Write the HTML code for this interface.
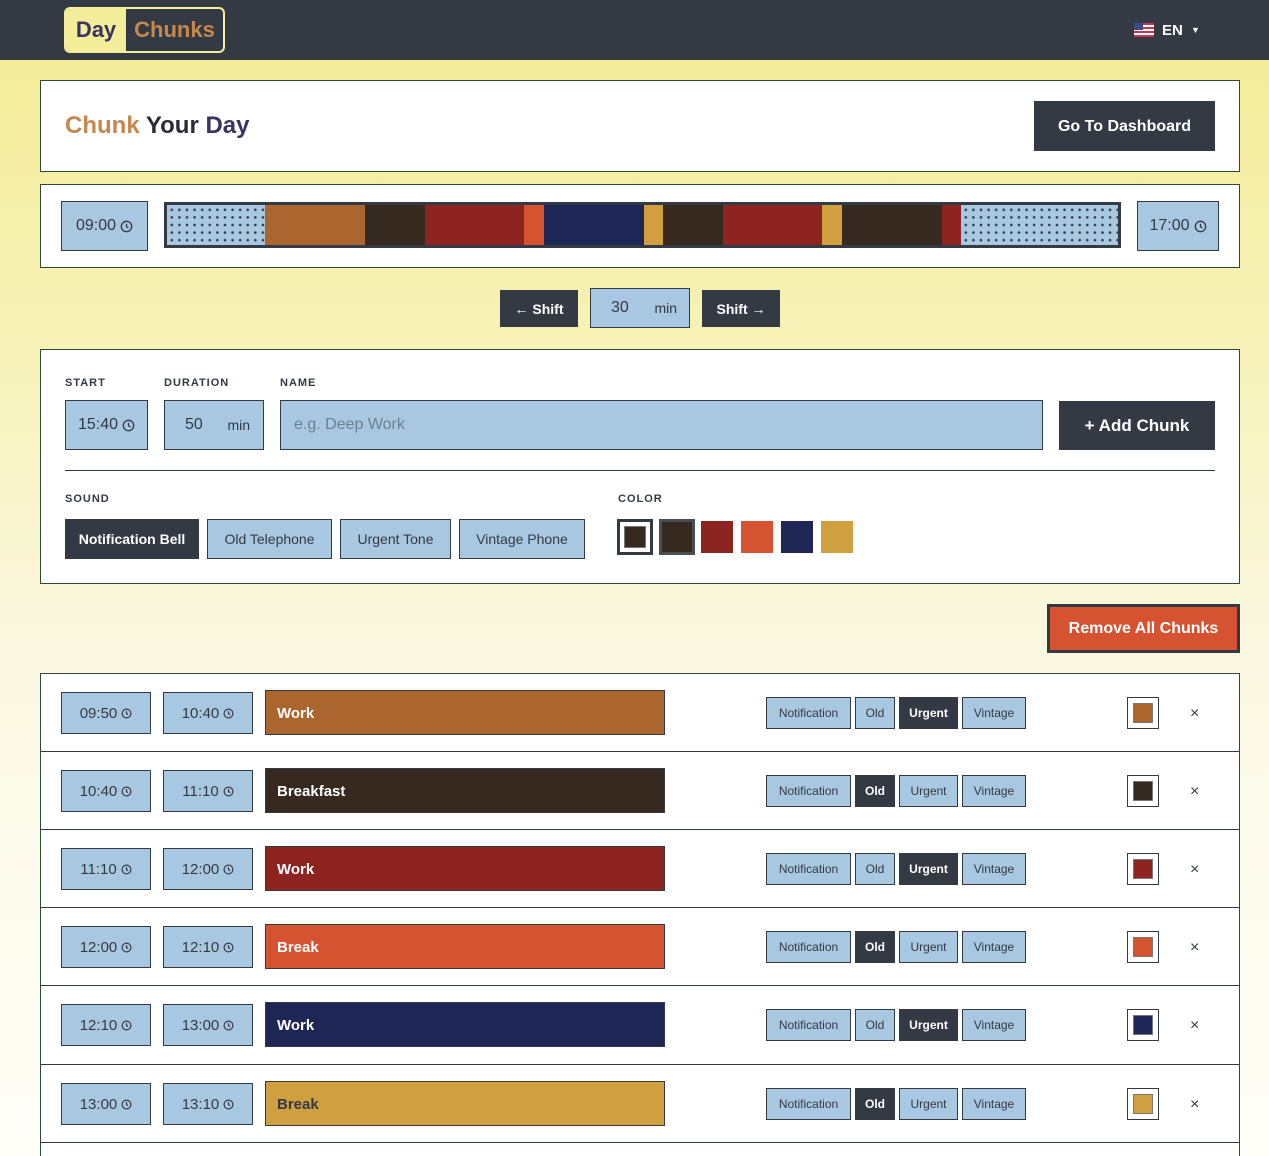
<!DOCTYPE html>
<html style="background:#fffef8"><head><meta charset="utf-8">
<style>
*{box-sizing:border-box;margin:0;padding:0}
html,body{overflow:hidden}
body{width:1269px;height:1156px;overflow:hidden;position:relative;font-family:"Liberation Sans",sans-serif;background:linear-gradient(#f4ed9a 60px,#f6f2b8 350px,#fbf8e2 650px,#fffef8 1156px);color:#343a44}
.a{position:absolute}
.nav{left:0;top:0;width:1269px;height:60px;background:#343a44}
.card{background:#fff;border:1px solid #2d4a36}
.lb{background:#a7c8e0;border:1px solid #343a44;display:flex;align-items:center;justify-content:center;color:#343a44}
.dk{background:#343a44;color:#fff;display:flex;align-items:center;justify-content:center;font-weight:bold}
.lab{font-size:11px;font-weight:bold;letter-spacing:1px;color:#343a44}
.clk{display:inline-block;vertical-align:middle;margin-left:4px}
.sb{font-size:12px;height:32px}
.x{font-size:16px;color:#343a44}
.dots{background-color:#a7c8e0;background-image:radial-gradient(#343a44 1.1px,transparent 1.5px);background-size:7.6px 7.6px;background-position:1px 1px}
</style></head><body>
<div class="a nav"></div>
<div class="a" style="left:64px;top:7px;width:161px;height:46px;border:2px solid #f4ed9a;border-radius:6px;overflow:hidden;display:flex">
 <div style="width:60px;background:#f4ed9a;color:#3b3360;font-weight:bold;font-size:22px;display:flex;align-items:center;justify-content:center">Day</div>
 <div style="flex:1;color:#c8874e;font-weight:bold;font-size:22px;display:flex;align-items:center;justify-content:center">Chunks</div>
</div>
<svg class="a" style="left:1134px;top:23px" width="20" height="14" viewBox="0 0 20 14"><rect width="20" height="14" fill="#fff"/><g fill="#c8364a"><rect y="0" width="20" height="2"/><rect y="4" width="20" height="2"/><rect y="8" width="20" height="2"/><rect y="12" width="20" height="2"/></g><rect width="9" height="7" fill="#3b4a8a"/></svg>
<div class="a" style="left:1162px;top:22px;color:#fff;font-weight:bold;font-size:15px">EN <span style="font-size:9px;margin-left:4px;vertical-align:2px">▼</span></div>

<div class="a card" style="left:40px;top:80px;width:1200px;height:92px"></div>
<div class="a" style="left:65px;top:112px;font-size:24px;font-weight:bold"><span style="color:#c8874e">Chunk</span> <span style="color:#2a2a38">Your</span> <span style="color:#3b3360">Day</span></div>
<div class="a dk" style="left:1034px;top:101px;width:181px;height:50px;font-size:16px;padding-top:2px">Go To Dashboard</div>

<div class="a card" style="left:40px;top:184px;width:1200px;height:84px"></div>
<div class="a lb" style="left:61px;top:201px;width:87px;height:50px;font-size:16px">09:00<svg class="clk" width="13" height="13" viewBox="0 0 14 14"><circle cx="7" cy="7" r="5.6" fill="none" stroke="#343a44" stroke-width="1.4"/><path d="M7 4v3.2l2 1.3" fill="none" stroke="#343a44" stroke-width="1.4"/></svg></div>
<div class="a lb" style="left:1137px;top:201px;width:82px;height:50px;font-size:16px">17:00<svg class="clk" width="13" height="13" viewBox="0 0 14 14"><circle cx="7" cy="7" r="5.6" fill="none" stroke="#343a44" stroke-width="1.4"/><path d="M7 4v3.2l2 1.3" fill="none" stroke="#343a44" stroke-width="1.4"/></svg></div>
<div class="a" style="left:164px;top:202px;width:957px;height:46px;border:3px solid #343a44;display:flex">
 <div class="dots" style="width:98px"></div>
 <div style="width:100px;background:#ab6630"></div>
 <div style="width:60px;background:#362920"></div>
 <div style="width:99px;background:#8e2420"></div>
 <div style="width:20px;background:#d65332"></div>
 <div style="width:100px;background:#1e2656"></div>
 <div style="width:19px;background:#d09f40"></div>
 <div style="width:60px;background:#362920"></div>
 <div style="width:99px;background:#8e2420"></div>
 <div style="width:20px;background:#d09f40"></div>
 <div style="width:100px;background:#362920"></div>
 <div style="width:19px;background:#8e2420"></div>
 <div class="dots" style="flex:1"></div>
</div>

<div class="a dk" style="left:500px;top:290px;width:78px;height:37px;font-size:14px">← Shift</div>
<div class="a lb" style="left:590px;top:288px;width:100px;height:40px;font-size:15px;justify-content:space-between;padding:0 12px 0 20px"><span style="font-size:16px">30</span><span style="font-size:14px">min</span></div>
<div class="a dk" style="left:702px;top:290px;width:78px;height:37px;font-size:14px">Shift →</div>

<div class="a card" style="left:40px;top:349px;width:1200px;height:235px"></div>
<div class="a lab" style="left:65px;top:377px">START</div>
<div class="a lab" style="left:164px;top:377px">DURATION</div>
<div class="a lab" style="left:280px;top:377px">NAME</div>
<div class="a lb" style="left:65px;top:400px;width:83px;height:50px;font-size:16px">15:40<svg class="clk" width="13" height="13" viewBox="0 0 14 14"><circle cx="7" cy="7" r="5.6" fill="none" stroke="#343a44" stroke-width="1.4"/><path d="M7 4v3.2l2 1.3" fill="none" stroke="#343a44" stroke-width="1.4"/></svg></div>
<div class="a lb" style="left:164px;top:400px;width:100px;height:50px;justify-content:space-between;padding:0 13px 0 20px"><span style="font-size:16px">50</span><span style="font-size:14px">min</span></div>
<div class="a lb" style="left:280px;top:400px;width:763px;height:50px;justify-content:flex-start;padding-left:13px;font-size:16px;color:#6e7f8e">e.g. Deep Work</div>
<div class="a dk" style="left:1059px;top:401px;width:156px;height:49px;font-size:17px">+ Add Chunk</div>
<div class="a" style="left:65px;top:470px;width:1150px;height:1px;background:#343a44"></div>
<div class="a lab" style="left:65px;top:493px">SOUND</div>
<div class="a lab" style="left:618px;top:493px">COLOR</div>
<div class="a dk" style="left:65px;top:519px;width:134px;height:40px;font-size:14px">Notification Bell</div>
<div class="a lb" style="left:207px;top:519px;width:125px;height:40px;font-size:14px">Old Telephone</div>
<div class="a lb" style="left:340px;top:519px;width:111px;height:40px;font-size:14px">Urgent Tone</div>
<div class="a lb" style="left:459px;top:519px;width:126px;height:40px;font-size:14px">Vintage Phone</div>
<div class="a" style="left:617px;top:519px;width:36px;height:36px;border:3px solid #343a44;background:#fff;padding:4px"><div style="width:100%;height:100%;background:#362920;border:1px solid #777"></div></div>
<div class="a" style="left:659px;top:519px;width:36px;height:36px;background:#362920;border:3px solid #4a4d52"></div>
<div class="a" style="left:701px;top:521px;width:32px;height:32px;background:#8e2420"></div>
<div class="a" style="left:741px;top:521px;width:32px;height:32px;background:#d65332"></div>
<div class="a" style="left:781px;top:521px;width:32px;height:32px;background:#1e2656"></div>
<div class="a" style="left:821px;top:521px;width:32px;height:32px;background:#d09f40"></div>

<div class="a" style="left:1047px;top:604px;width:193px;height:49px;background:#d65332;border:3px solid #343a44;color:#fff;font-weight:bold;font-size:16px;display:flex;align-items:center;justify-content:center">Remove All Chunks</div>

<div class="a card" style="left:40px;top:673px;width:1200px;height:483px;border-bottom:none"></div>

<div id="rows"></div>
<script>
var clk='<svg class="clk" width="11" height="11" viewBox="0 0 14 14"><circle cx="7" cy="7" r="5.6" fill="none" stroke="#343a44" stroke-width="1.5"/><path d="M7 4v3.2l2 1.3" fill="none" stroke="#343a44" stroke-width="1.5"/></svg>';
var R=[["09:50","10:40","Work","#ab6630","#fff",2],["10:40","11:10","Breakfast","#362920","#fff",1],["11:10","12:00","Work","#8e2420","#fff",2],["12:00","12:10","Break","#d65332","#fff",1],["12:10","13:00","Work","#1e2656","#fff",2],["13:00","13:10","Break","#d09f40","#343a44",1]];
var h='';
var S=[["Notification",766,85],["Old",855,40],["Urgent",899,59],["Vintage",962,64]];
R.forEach(function(r,i){var t=673+i*78+(i==5?1:0);
if(i>0)h+='<div class="a" style="left:41px;top:'+t+'px;width:1198px;height:1px;background:#343a44"></div>';
if(i==5)h+='<div class="a" style="left:41px;top:1142px;width:1198px;height:1px;background:#343a44"></div>';
h+='<div class="a lb" style="left:61px;top:'+(t+19)+'px;width:90px;height:42px;font-size:15px">'+r[0]+clk+'</div>';
h+='<div class="a lb" style="left:163px;top:'+(t+19)+'px;width:90px;height:42px;font-size:15px">'+r[1]+clk+'</div>';
h+='<div class="a" style="left:265px;top:'+(t+17)+'px;width:400px;height:45px;background:'+r[3]+';border:1px solid #343a44;color:'+r[4]+';font-weight:bold;font-size:15px;padding:14px 0 0 11px">'+r[2]+'</div>';
S.forEach(function(s,j){var on=(j==r[5]);h+='<div class="a '+(on?'dk':'lb')+' sb" style="left:'+s[1]+'px;top:'+(t+24)+'px;width:'+s[2]+'px">'+s[0]+'</div>';});
h+='<div class="a" style="left:1127px;top:'+(t+24)+'px;width:32px;height:32px;border:1px solid #343a44;background:#fff;padding:5px"><div style="width:100%;height:100%;background:'+r[3]+';border:1px solid #777"></div></div>';
h+='<div class="a x" style="left:1190px;top:'+(t+32)+'px">×</div>';
});
document.getElementById('rows').innerHTML=h;
</script>
</body></html>
